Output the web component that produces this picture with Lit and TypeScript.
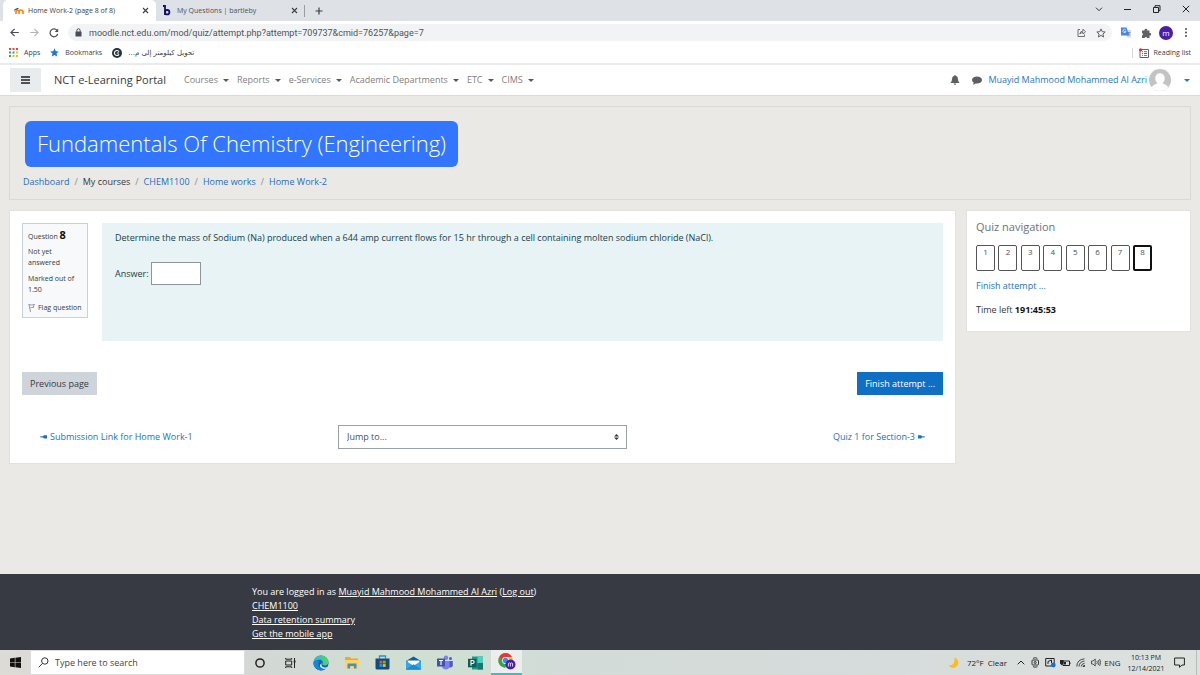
import { LitElement, html, svg, css } from "lit";
import { customElement } from "lit/decorators.js";

const shared = css`
  *, *::before, *::after { box-sizing: border-box; }
  :host { display: block; font-family: "Open Sans", "Noto Sans", "DejaVu Sans", sans-serif; }
  button, input, select { font: inherit; color: inherit; margin: 0; padding: 0; border: 0; border-radius: 0; background: none; }
  a { text-decoration: none; color: inherit; }
  svg { display: block; flex: none; }
`;

const closeIcon = html`<svg width="7" height="7" viewBox="0 0 7 7" fill="none" stroke="#3c4043" stroke-width="1.1"><path d="M1 1l5 5M6 1L1 6"/></svg>`;

@customElement("browser-chrome")
export class BrowserChrome extends LitElement {
  static styles = [shared, css`
    :host { background: #fff; color: #3c4043; border-bottom: 2px solid #eaebed; }
    .tabs { display: flex; height: 21px; background: #dee1e6; align-items: stretch; font-size: 7px; padding-left: 3px; }
    .tab { display: flex; align-items: center; width: 153px; padding: 0 7px 0 11px; gap: 4px; }
    .tab.active { background: #fff; border-radius: 5px 5px 0 0; }
    .tab .label { flex: 1; white-space: nowrap; overflow: hidden; }
    .tab.other { width: 148px; padding: 0 6px 0 7px; gap: 6px; color: #4f5357; }
    .iconbtn { display: grid; place-items: center; }
    .newtab { width: 27px; border: 0; }
    .split { width: 1px; height: 12px; background: #9a9da2; align-self: center; }
    .grow { flex: 1; }
    .win { width: 29px; padding-bottom: 3px; }
    .bar { display: flex; align-items: center; height: 23px; padding: 0 4px 0 4px; }
    .tool { width: 20px; height: 20px; }
    .omni { flex: 1; height: 17px; display: flex; align-items: center; background: #f1f3f4; border-radius: 9px; margin: 0 4px; padding: 0 1px 0 7px; }
    .omni input { flex: 1; min-width: 0; height: 17px; margin-left: 7px; font-family: Roboto, sans-serif; font-size: 9px; color: #4f5458; outline: 0; }
    .me { width: 14px; height: 14px; border-radius: 50%; background: #4a1fa8; color: #fff; font-size: 8px; line-height: 13px; text-align: center; }
    .marks { display: flex; align-items: center; height: 19px; font-size: 7px; padding: 0 9px 2px 9px; }
    .marks a { display: flex; align-items: center; gap: 6px; margin-right: 10px; white-space: nowrap; }
    .marks a.last { margin-right: 0; gap: 5px; }
    .marks .vr { width: 1px; height: 10px; background: #d4d6d9; margin-right: 6px; }
    .arabic { font-family: "DejaVu Sans", sans-serif; }
  `];
  render() {
    const dots = [0, 1, 2].flatMap((r) => [0, 1, 2].map((c) => svg`<rect x=${c * 3.5} y=${r * 3.5} width="2" height="2"
      fill=${["#e8453c", "#e8453c", "#e8453c", "#34a853", "#4285f4", "#fbbc05", "#34a853", "#fbbc05", "#fbbc05"][r * 3 + c]}/>`));
    return html`
      <div class="tabs">
        <div class="tab active">
          <svg width="10" height="8" viewBox="0 0 10 8" fill="none"><path d="M2 7V4.500q0-1.500 1.300-1.500T5 4.500V7M5 4.500Q5 3 6.800 3T9 4.500V7" stroke="#f98012" stroke-width="1.600"/><path d="M0 2.600L4 .8l.8.7L2 3z" fill="#444"/><path d="M.6 2.600v2" stroke="#555" stroke-width=".6"/></svg>
          <span class="label">Home Work-2 (page 8 of 8)</span>
          <button class="iconbtn" aria-label="Close tab">${closeIcon}</button>
        </div>
        <div class="tab other">
          <svg width="8" height="11" viewBox="0 0 8 11" fill="none" stroke="#140f6b" stroke-width="1.800"><path d="M0 1h2v9"/><circle cx="4.200" cy="7.200" r="2.200"/></svg>
          <span class="label">My Questions | bartleby</span>
          <button class="iconbtn" aria-label="Close tab">${closeIcon}</button>
        </div>
        <span class="split"></span>
        <button class="iconbtn newtab" aria-label="New tab"><svg width="8" height="8" viewBox="0 0 8 8" stroke="#3c4043" stroke-width="1.200"><path d="M4 .5v7M.5 4h7"/></svg></button>
        <span class="grow"></span>
        <button class="iconbtn win" aria-label="Search tabs"><svg width="8" height="5" viewBox="0 0 8 5" fill="none" stroke="#333"><path d="M1 .7l3 3 3-3"/></svg></button>
        <button class="iconbtn win" aria-label="Minimize"><svg width="7" height="7" viewBox="0 0 7 7" stroke="#222"><path d="M0 3.500h7"/></svg></button>
        <button class="iconbtn win" aria-label="Restore"><svg width="8" height="8" viewBox="0 0 8 8" fill="none" stroke="#222"><path d="M.5 2.500h5v5h-5zM2 2V.7h5v5H6"/></svg></button>
        <button class="iconbtn win" aria-label="Close"><svg width="8" height="8" viewBox="0 0 8 8" stroke="#222"><path d="M.8.8l6.400 6.400M7.200.8L.8 7.200"/></svg></button>
      </div>
      <div class="bar">
        <button class="iconbtn tool" aria-label="Back"><svg width="9" height="9" viewBox="0 0 9 9" fill="none" stroke="#4a4d51" stroke-width="1.200"><path d="M8.800 4.500H1M4.600.8L.9 4.500l3.700 3.700"/></svg></button>
        <button class="iconbtn tool" aria-label="Forward"><svg width="9" height="9" viewBox="0 0 9 9" fill="none" stroke="#b4b7ba" stroke-width="1.200"><path d="M.2 4.500H8M4.400.8l3.700 3.700-3.700 3.700"/></svg></button>
        <button class="iconbtn tool" aria-label="Reload"><svg width="10" height="10" viewBox="0 0 10 10" fill="none" stroke="#4a4d51" stroke-width="1.200"><path d="M8.700 6A3.900 3.900 0 1 1 8 2.400"/><path d="M9.200.4v3.500H5.700z" fill="#4a4d51" stroke="none"/></svg></button>
        <div class="omni">
          <svg width="7" height="9" viewBox="0 0 7 9"><path d="M1.900 4V2.400a1.600 1.600 0 0 1 3.200 0V4" fill="none" stroke="#4a4d51"/><rect x=".5" y="3.500" width="6" height="5" rx=".6" fill="#4a4d51"/></svg>
          <input aria-label="Address" .value=${"moodle.nct.edu.om/mod/quiz/attempt.php?attempt=709737&cmid=76257&page=7"}>
          <button class="iconbtn tool" aria-label="Share"><svg width="9" height="9" viewBox="0 0 9 9" fill="none" stroke="#5f6368" stroke-width=".9"><path d="M3 1.500H1v7h6.500v-2M2.800 6q.3-2.800 3.200-2.900V1.200L8.600 3.800 6 6V4.500Q4 4.500 2.800 6z"/></svg></button>
          <button class="iconbtn tool" aria-label="Bookmark"><svg width="10" height="10" viewBox="0 0 10 10" fill="none" stroke="#5f6368"><path d="M5 .9l1.200 2.800 3 .3-2.300 2 .7 3L5 7.400 2.400 9l.7-3L.8 4l3-.3z"/></svg></button>
        </div>
        <button class="iconbtn tool" aria-label="Translate"><svg width="10" height="11" viewBox="0 0 10 11"><path d="M4 3h6v7.500H6z" fill="#d7dadd"/><path d="M0 .5h5.500L8 8.500H0z" fill="#4285f4"/><path d="M5 4.400H3.500v.7M4.700 3A1.600 1.600 0 1 0 5 4.600" fill="none" stroke="#fff" stroke-width=".8"/><path d="M6.500 5.500h3M8 5v.8Q8 7.500 6.800 8.500M7 6.300q.6 1.500 2 2" fill="none" stroke="#5c6f8a" stroke-width=".6"/></svg></button>
        <button class="iconbtn tool" aria-label="Extensions"><svg width="10" height="10" viewBox="0 0 10 10" fill="#5f6368"><path d="M1 2.500h2.600a1.300 1.300 0 1 1 2.500 0h2.400V5a1.300 1.300 0 1 1 0 2.500V10H6.200a1.300 1.300 0 0 0-2.500 0H1V7.400a1.300 1.300 0 0 0 0-2.500z"/></svg></button>
        <button class="iconbtn tool" aria-label="Profile"><span class="me">m</span></button>
        <button class="iconbtn tool" aria-label="Menu"><svg width="2" height="9" viewBox="0 0 2 9" fill="#4a4d51"><circle cx="1" cy="1" r="1"/><circle cx="1" cy="4.500" r="1"/><circle cx="1" cy="8" r="1"/></svg></button>
      </div>
      <div class="marks">
        <a href="#"><svg width="9" height="9" viewBox="0 0 9 9">${dots}</svg>Apps</a>
        <a href="#"><svg width="9" height="9" viewBox="0 0 10 10" fill="#1a73e8"><path d="M5 .3l1.400 3.200 3.400.3-2.600 2.300.8 3.400L5 7.700 2 9.500l.8-3.400L.2 3.800l3.400-.3z"/></svg>Bookmarks</a>
        <a href="#"><svg width="10" height="10" viewBox="0 0 10 10"><circle cx="5" cy="5" r="5" fill="#26323c"/><path d="M7 3.600A2.500 2.500 0 1 0 7 6.400M4.800 5H7" fill="none" stroke="#fff" stroke-width="1.100"/></svg><span class="arabic" dir="rtl" lang="ar">تحويل كيلومتر إلى م...</span></a>
        <span class="grow"></span><span class="vr"></span>
        <a class="last" href="#"><svg width="10" height="10" viewBox="0 0 10 10"><path d="M1 1.500h8.500v8H1z" fill="none" stroke="#5f6368"/><path d="M3 3.700h1M5 3.700h3M3 5.500h1M5 5.500h3M3 7.400h1M5 7.400h3" stroke="#5f6368" stroke-width=".9"/><circle cx="1.600" cy="1.800" r="1.600" fill="#d93025"/></svg>Reading list</a>
      </div>`;
  }
}

@customElement("moodle-page")
export class MoodlePage extends LitElement {
  static styles = [shared, css`
    :host { display: flex; flex-direction: column; flex: 1; background: #ebe9e5; font-size: 9px; line-height: 14px; color: #343a40; }
    nav.top { display: flex; align-items: center; height: 31px; padding: 0 10px; background: #fff; border-bottom: 1px solid #dcdad6; white-space: nowrap; }
    .burger { width: 31px; height: 24px; background: #e9ecef; display: grid; place-items: center; }
    .brand { font-size: 11px; margin: 0 18px 0 13px; color: #373a3c; }
    .menu { display: flex; gap: 8px; color: #7f8081; }
    .menu a, .user { display: flex; align-items: center; gap: 5px; }
    .menu svg { color: #55585a; }
    .grow { flex: 1; }
    .user { color: #1f76c8; gap: 2px; }
    .note { display: grid; place-items: center; width: 22px; }
    .drop { margin-left: 11px; }
    main { flex: 1; padding: 10px 9px 40px; }
    .head { border: 1px solid #dbd9d5; padding: 14px 13px 8px; }
    h1 { display: inline-block; margin: 0 0 0 2px; padding: 0 12px 2px; background: #3276ff; border-radius: 6px; color: #fff; font-size: 22px; line-height: 44px; font-weight: 300; white-space: nowrap; }
    .crumbs { display: flex; margin: 6px 0 0; padding: 2px 0; list-style: none; gap: 5px; }
    .crumbs li { display: flex; gap: 5px; }
    .crumbs li + li::before { content: "/"; color: #868e96; }
    .link { color: #1f6fc0; }
    .cols { display: grid; grid-template-columns: minmax(0, 1fr) 225px; gap: 10px; align-items: start; margin-top: 10px; }
    .card { background: #fff; border: 1px solid #e2e1de; }
    .quiz { padding: 12px 12px 14px; }
    .question { display: grid; grid-template-columns: 66px minmax(0, 1fr); gap: 14px; align-items: start; }
    .info { background: #f8f9fa; border: 1px solid #cad0d7; padding: 4px 4px 3px 5px; font-size: 7px; line-height: 11px; }
    .info p { margin: 0 0 5px; }
    .info .no { line-height: 13px; margin-bottom: 3px; }
    .info b { font-size: 11px; color: #111; }
    .flag { display: flex; align-items: center; gap: 3px; line-height: 12px; margin-top: 7px; white-space: nowrap; }
    .formulation { background: #e7f3f5; color: #1c4048; min-height: 118px; padding: 8px 12px 8px 13px; }
    .formulation p { margin: 0 0 17px; }
    .answer { display: flex; align-items: center; gap: 2px; }
    .answer input { width: 50px; height: 23px; background: #fff; border: 1px solid #8f959e; padding: 0 4px; }
    .actions { display: flex; justify-content: space-between; margin-top: 31px; }
    .btn { height: 23px; padding: 0 8px; background: #ced4da; color: #343a40; }
    .btn.primary { background: #0f6fc5; color: #fff; }
    .around { display: grid; grid-template-columns: repeat(3, 1fr); align-items: center; margin-top: 30px; }
    .around > * { margin: 0 9px; }
    .around a { display: flex; align-items: center; gap: 3px; padding: 0 9px; color: #1f6fc0; white-space: nowrap; }
    .around .next { justify-self: end; }
    .jump { display: grid; align-items: center; }
    .jump select, .jump svg { grid-area: 1 / 1; }
    .jump select { appearance: none; width: 100%; height: 24px; border: 1px solid #9a9fa8; padding: 0 8px; background: #fff; color: #495057; }
    .jump svg { justify-self: end; margin-right: 8px; pointer-events: none; }
    .side { padding: 8px 9px 14px; }
    h2 { margin: 0 0 10px; font-size: 11px; line-height: 16px; font-weight: 400; color: #6a737b; }
    .nums { display: flex; justify-content: space-between; max-width: 176px; }
    .nums a { width: 19px; height: 26px; border: 1px solid #555; border-radius: 2px; text-align: center; font-size: 8px; line-height: 12px; color: #495057; }
    .nums a.now { border: 2px solid #111; line-height: 10px; }
    .side p { margin: 8px 0 0; }
    .side p + p { margin-top: 10px; }
    .side b { color: #111; }
    footer { background: #373a42; color: #fff; padding: 11px 0 9px; }
    .inner { width: 58%; margin: 0 auto; }
    .inner a { text-decoration: underline; }
  `];
  render() {
    const caret = html`<svg width="6" height="3" viewBox="0 0 6 3" fill="currentColor"><path d="M0 0h6L3 3z"/></svg>`;
    const menu = ["Courses", "Reports", "e-Services", "Academic Departments", "ETC", "CIMS"];
    return html`
      <nav class="top">
        <button class="burger" aria-label="Side panel"><svg width="9" height="8" viewBox="0 0 9 8" stroke="#1d2125" stroke-width="1.400"><path d="M0 1h9M0 4h9M0 7h9"/></svg></button>
        <a class="brand" href="#">NCT e-Learning Portal</a>
        <div class="menu">${menu.map((m) => html`<a href="#">${m} ${caret}</a>`)}</div>
        <span class="grow"></span>
        <button class="note" aria-label="Notifications"><svg width="10" height="10" viewBox="0 0 10 10" fill="#5d6063"><path d="M5 0q.6 0 .7.8Q8 1.400 8 4q0 2.500 1.500 4h-9Q2 6.500 2 4q0-2.600 2.300-3.200Q4.400 0 5 0zM3.700 8.400h2.600Q6.200 9.700 5 9.700T3.700 8.400z"/></svg></button>
        <button class="note" aria-label="Messages"><svg width="10" height="9" viewBox="0 0 10 9" fill="#5d6063"><path d="M5 .5c2.800 0 5 1.500 5 3.500S7.800 7.500 5 7.500q-.8 0-1.500-.1Q2.300 8.500.8 8.600 1.700 7.800 1.700 6.600 0 5.600 0 4C0 2 2.200.5 5 .5z"/></svg></button>
        <a class="user" href="#">Muayid Mahmood Mohammed Al Azri
          <svg width="22" height="22" viewBox="0 0 22 22"><defs><clipPath id="u"><circle cx="11" cy="11" r="11"/></clipPath></defs><g clip-path="url(#u)"><path d="M0 0h22v22H0z" fill="#c3c3c3"/><path d="M11 4.200c3 0 4.700 2.200 4.700 5 0 2.200-.8 3.800-2 4.800.6 1.400 4.300 1.500 5.300 4V23H3v-5c1-2.500 4.700-2.600 5.300-4-1.200-1-2-2.600-2-4.800 0-2.800 1.700-5 4.700-5z" fill="#fff"/></g></svg>
          <span class="drop">${caret}</span></a>
      </nav>
      <main>
        <header class="head">
          <h1>Fundamentals Of Chemistry (Engineering)</h1>
          <ol class="crumbs">
            <li><a class="link" href="#">Dashboard</a></li><li>My courses</li><li><a class="link" href="#">CHEM1100</a></li><li><a class="link" href="#">Home works</a></li><li><a class="link" href="#">Home Work-2</a></li>
          </ol>
        </header>
        <div class="cols">
          <section class="card quiz">
            <div class="question">
              <div class="info">
                <p class="no">Question <b>8</b></p><p>Not yet answered</p><p>Marked out of 1.50</p>
                <a class="flag" href="#"><svg width="7" height="8" viewBox="0 0 7 8" fill="none" stroke="#7b8084" stroke-width=".8"><path d="M.5.500Q3.500 1.500 6.500.500 5 2 5.500 3.500 3.500 3 2.300 4M1 .7L2.500 8"/></svg>Flag question</a>
              </div>
              <div class="formulation">
                <p>Determine the mass of Sodium (Na) produced when a 644 amp current flows for 15 hr through a cell containing molten sodium chloride (NaCl).</p>
                <div class="answer"><label for="ans">Answer:</label><input id="ans" type="text"></div>
              </div>
            </div>
            <div class="actions"><button class="btn">Previous page</button><button class="btn primary">Finish attempt ...</button></div>
            <div class="around">
              <a href="#"><svg width="7" height="4" viewBox="0 0 7 4" fill="currentColor"><path d="M0 1.500L3 1.300 4 .3h3v3.200H4L3 2.500 0 2.300z"/></svg>Submission Link for Home Work-1</a>
              <div class="jump"><select aria-label="Jump to"><option>Jump to...</option></select><svg width="5" height="6" viewBox="0 0 5 6" fill="#343a40"><path d="M2.500 0L5 2.500H0zM2.500 6L0 3.500h5z"/></svg></div>
              <a class="next" href="#">Quiz 1 for Section-3<svg width="7" height="4" viewBox="0 0 7 4" fill="currentColor"><path d="M7 1.500L4 1.300 3 .3H0v3.200h3l1-1 3-.2z"/></svg></a>
            </div>
          </section>
          <aside class="card side">
            <h2>Quiz navigation</h2>
            <div class="nums">${[1, 2, 3, 4, 5, 6, 7, 8].map((n) => html`<a href="#" class=${n === 8 ? "now" : ""}>${n}</a>`)}</div>
            <p><a class="link" href="#">Finish attempt ...</a></p>
            <p>Time left <b>191:45:53</b></p>
          </aside>
        </div>
      </main>
      <footer><div class="inner">
        <div>You are logged in as <a href="#">Muayid Mahmood Mohammed Al Azri</a> (<a href="#">Log out</a>)</div>
        <div><a href="#">CHEM1100</a></div><div><a href="#">Data retention summary</a></div><div><a href="#">Get the mobile app</a></div>
      </div></footer>`;
  }
}

@customElement("task-bar")
export class TaskBar extends LitElement {
  static styles = [shared, css`
    :host { display: flex; height: 25px; font-size: 8px; line-height: 11px; color: #222; background: linear-gradient(90deg, #dcdbd5 0%, #d3d8d5 22%, #cfe0d2 36%, #d3dbd8 48%, #d6dcdb 75%, #dde2df 100%); }
    button { display: grid; place-items: center; }
    .start { width: 30px; }
    .search { display: flex; align-items: center; gap: 6px; width: 215px; padding-left: 7px; background: #fff; border: 1px solid #dcdcdc; }
    .search input { flex: 1; min-width: 0; font-size: 9px; outline: 0; }
    .search input::placeholder { color: #444; opacity: 1; }
    .app { width: 31px; }
    .app.sys { width: 30px; }
    .app.on { background: #eceeed; border-bottom: 2px solid #3bbfc4; }
    .grow { flex: 1; }
    .weather { display: flex; align-items: center; gap: 8px; margin-right: 6px; white-space: pre; }
    .tray { width: 15px; }
    .lang { width: 19px; white-space: nowrap; }
    .clock { width: 46px; align-self: center; text-align: center; font-size: 7px; white-space: nowrap; margin-left: 1px; }
    .notif { width: 28px; padding-right: 6px; border-right: 1px solid #b9bdbb; margin-right: 3px; }
  `];
  render() {
    return html`
      <button class="start" aria-label="Start"><svg width="11" height="11" viewBox="0 0 11 11" fill="#111"><path d="M0 1.500L4.800.8v4.400H0zM5.400.7L11 0v5.200H5.400zM0 5.800h4.800v4.400L0 9.500zM5.400 5.800H11V11l-5.600-.8z"/></svg></button>
      <div class="search"><svg width="11" height="11" viewBox="0 0 11 11" fill="none" stroke="#333"><circle cx="6.800" cy="4" r="3.200"/><path d="M4.500 6.400L.7 10.300"/></svg><input type="text" aria-label="Search" placeholder="Type here to search"></div>
      <button class="app sys" aria-label="Cortana"><svg width="10" height="10" viewBox="0 0 10 10" fill="none" stroke="#222" stroke-width="1.500"><circle cx="5" cy="5" r="4.100"/></svg></button>
      <button class="app sys" aria-label="Task view"><svg width="11" height="10" viewBox="0 0 11 10" fill="none" stroke="#222"><path d="M.7 3h6v4h-6zM.7 0v1.200h6V0M.7 10V8.800h6V10M9.500 0v10"/><path d="M8.700 2.500h1.800v2H8.700z" fill="#222" stroke="none"/></svg></button>
      <button class="app" aria-label="Edge"><svg width="16" height="16" viewBox="0 0 16 16"><defs><linearGradient id="e" x1="0" x2="1"><stop stop-color="#2ab6e8"/><stop offset="1" stop-color="#59d35c"/></linearGradient></defs><circle cx="8" cy="8" r="7.600" fill="#0c63b8"/><path d="M.5 7.500C1 3 4.200.4 8 .4c4.400 0 7.600 3 7.600 6.400 0 2.500-1.700 3.700-3.800 3.700-1.800 0-2.800-.7-2.400-1.700.9-1.700-.3-4-2.900-4-2.900 0-5.200 1.500-6 2.700z" fill="url(#e)"/><path d="M6.500 6.500Q4.300 8.500 6 11.500t6.500 2.800Q6.500 17 2.500 13-.5 9.500 1 6.800 3.500 4 6.500 6.500z" fill="#1687d3"/><path d="M8.700 8.200q-1 2 .8 3.500t4.700.3l.8-.4-1.300 2q-3.500 1-6-1-2-2.500 1-4.400z" fill="#d9e7e4"/></svg></button>
      <button class="app" aria-label="File Explorer"><svg width="14" height="13" viewBox="0 0 14 13"><path d="M0 1h5l1 1.500h7V12H0z" fill="#e8a92c"/><path d="M0 4h14v8.500H0z" fill="#fcd462"/><path d="M2.500 7.500h9v5h-2.600V10H5.100v2.500H2.500z" fill="#3d8fd8"/></svg></button>
      <button class="app" aria-label="Store"><svg width="15" height="15" viewBox="0 0 15 15"><path d="M4.500 3.500V1h6v2.500" fill="none" stroke="#2a8fd6" stroke-width="1.300"/><path d="M.5 3.500h14V13q0 1.500-1.500 1.500H2Q.5 14.500.5 13z" fill="#174a7c"/><path d="M4.500 5.700h2.800v2.800H4.500z" fill="#f25022"/><path d="M7.900 5.700h2.800v2.800H7.900z" fill="#7fba00"/><path d="M4.500 9.100h2.800v2.800H4.500z" fill="#00a4ef"/><path d="M7.900 9.100h2.800v2.800H7.900z" fill="#ffb900"/></svg></button>
      <button class="app" aria-label="Mail"><svg width="15" height="14" viewBox="0 0 15 14"><path d="M0 5L7.500.5 15 5v8.500H0z" fill="#0f5fa8"/><path d="M1.500 4.500h12v5h-12z" fill="#fff"/><path d="M0 5l7.500 4.700L15 5v8.500H0z" fill="#2fa8e8"/><path d="M0 13.500l7.500-5.300 7.500 5.300z" fill="#1c8ad4"/></svg></button>
      <button class="app" aria-label="Teams"><svg width="16" height="15" viewBox="0 0 16 15"><circle cx="9" cy="2.700" r="2.200" fill="#7b83eb"/><circle cx="13.500" cy="3.500" r="1.500" fill="#5059c9"/><path d="M11 6h4.800v4.300q0 2.200-2.500 2.200H11z" fill="#5059c9"/><path d="M5 6h7.500v4.500q0 4-3.700 4T5 10.500z" fill="#7b83eb"/><path d="M0 3.500h8v8H0z" fill="#464eb8"/><path d="M2 5.500h4M4 5.500v4.500" stroke="#fff" stroke-width="1.100"/></svg></button>
      <button class="app" aria-label="Publisher"><svg width="15" height="14" viewBox="0 0 15 14"><path d="M4 .5h11v13H4z" fill="#1a9b8e"/><path d="M9.500.5H15v6.500H9.500z" fill="#4fd0bf"/><path d="M9.500 7H15v6.500H9.500z" fill="#137a70"/><path d="M0 2.800h8.500v8.500H0z" fill="#0b5f56"/><path d="M3 9.700V4.500h1.600q1.500 0 1.500 1.500T4.600 7.500H3" fill="none" stroke="#fff" stroke-width="1.100"/></svg></button>
      <button class="app on" aria-label="Chrome"><svg width="18" height="17" viewBox="0 0 18 17"><circle cx="7.500" cy="7.500" r="7.200" fill="#fbc116"/><path d="M1.200 4A7.200 7.200 0 0 1 14 4H7.500L4.500 9z" fill="#e33b2e"/><path d="M1.200 4A7.200 7.200 0 0 0 7 14.700L10 9.500 4.500 9z" fill="#2da94f"/><circle cx="7.500" cy="7.500" r="3.400" fill="#fff"/><circle cx="7.500" cy="7.500" r="2.700" fill="#4285f4"/><circle cx="12.500" cy="11.500" r="5" fill="#4a1fa8"/><path d="M10.400 13.500v-3q1-1 2 0v3M12.400 10.500q1.200-1 2.200 0v3" fill="none" stroke="#fff" stroke-width=".8"/></svg></button>
      <span class="grow"></span>
      <div class="weather"><svg width="11" height="11" viewBox="0 0 11 11"><path d="M6.500.5a5.300 5.300 0 1 1-6 7.800Q7 9 6.500.5z" fill="#fdbb22"/></svg><span>72°F  Clear</span></div>
      <button class="tray" aria-label="Hidden icons"><svg width="8" height="5" viewBox="0 0 8 5" fill="none" stroke="#222"><path d="M.7 4.300L4 1l3.300 3.300"/></svg></button>
      <button class="tray" aria-label="Meet now"><svg width="9" height="11" viewBox="0 0 9 11" fill="none" stroke="#222" stroke-width=".9"><rect x="1" y="3" width="6.500" height="5" rx=".8"/><circle cx="4.200" cy="5.500" r="1"/><path d="M2 1.300q2.200-1 4.400 0M2 9.700q2.200 1 4.400 0"/></svg></button>
      <button class="tray" aria-label="Sync"><svg width="11" height="11" viewBox="0 0 11 11"><path d="M.7 1.500h8.500v7.500H.7z" fill="none" stroke="#222"/><path d="M3 7V4.500L6.500 3v3" fill="none" stroke="#222"/><circle cx="8.300" cy="8" r="2.400" fill="#1a6fd0"/></svg></button>
      <button class="tray" aria-label="Battery"><svg width="11" height="8" viewBox="0 0 11 8"><path d="M3 2h6.500v4.500H3zM10 3.500v1.500" fill="none" stroke="#222"/><path d="M4 3h2v2.500H4zM0 1h3.500v3L2 6.500 0 4.500z" fill="#222"/></svg></button>
      <button class="tray" aria-label="Wi-Fi"><svg width="9" height="9" viewBox="0 0 9 9" fill="none" stroke="#333" stroke-width=".9"><path d="M.8 8.500Q1 1.500 8.500.8M3 8.500Q3.200 3.800 8.500 3M5.200 8.500Q5.500 5.700 8.500 5.300"/><path d="M8.500 7v1.500H7z" fill="#333"/></svg></button>
      <button class="tray" aria-label="Volume"><svg width="10" height="9" viewBox="0 0 10 9" fill="none" stroke="#333" stroke-width=".8"><path d="M.5 3h1.500L4.200 1v7L2 6H.5zM5.800 3q1 1.500 0 3M7.200 2q1.700 2.500 0 5M8.600 1q2.200 3.500 0 7"/></svg></button>
      <button class="lang">ENG</button>
      <div class="clock">10:13 PM<br>12/14/2021</div>
      <button class="notif" aria-label="Action center"><svg width="11" height="11" viewBox="0 0 11 11" fill="none" stroke="#222"><path d="M.6 1h9.800v7H8L5.500 10.300V8H.6z"/></svg></button>`;
  }
}

@customElement("app-root")
export class AppRoot extends LitElement {
  static styles = css`:host { display: flex; flex-direction: column; min-height: 100vh; }`;
  render() {
    return html`<browser-chrome></browser-chrome><moodle-page></moodle-page><task-bar></task-bar>`;
  }
}
